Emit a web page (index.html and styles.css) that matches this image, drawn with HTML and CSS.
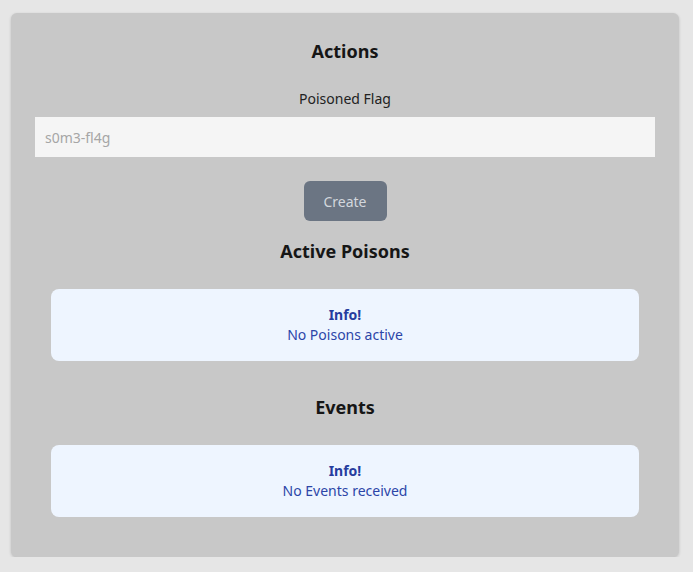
FILE: index.html
```html
<!DOCTYPE html>
<html lang="en">
<head>
<meta charset="utf-8">
<title>Poisons</title>
<link rel="stylesheet" href="styles.css">
</head>
<body>
<main class="card">
  <h2 class="title first">Actions</h2>
  <label class="label" for="flag">Poisoned Flag</label>
  <input class="input" id="flag" type="text" placeholder="s0m3-fl4g">
  <div class="actions"><button class="btn" type="button">Create</button></div>

  <h2 class="title">Active Poisons</h2>
  <div class="alert">
    <div class="alert-title">Info!</div>
    <div class="alert-text">No Poisons active</div>
  </div>

  <h2 class="title">Events</h2>
  <div class="alert">
    <div class="alert-title">Info!</div>
    <div class="alert-text">No Events received</div>
  </div>
</main>
</body>
</html>
```

FILE: styles.css
```css
html, body {
  margin: 0;
  padding: 0;
  background: #e6e6e6;
}
body {
  font-family: "Noto Sans", "Open Sans", sans-serif;
  color: #1a1a1a;
  padding: 13px 14px 0 11px;
}
.card {
  background: #c8c8c8;
  border-radius: 6px;
  box-shadow: 0 1px 3px rgba(0,0,0,0.18);
  padding: 24px 24px 24px;
  display: flex;
  flex-direction: column;
}
.title {
  margin: 16px 0 0;
  font-size: 18px;
  line-height: 28px;
  font-weight: 700;
  text-align: center;
  color: #161616;
}
.title.first { margin-top: 0; }
.label {
  display: block;
  margin-top: 24px;
  font-size: 14px;
  line-height: 20px;
  text-align: center;
  color: #222;
}
.input {
  margin-top: 8px;
  height: 40px;
  box-sizing: border-box;
  border: none;
  background: #f5f5f5;
  padding: 0 10px;
  font-family: inherit;
  font-size: 14px;
  color: #333;
  outline: none;
}
.input::placeholder { color: #a6a6a6; }
.actions {
  margin-top: 24px;
  display: flex;
  justify-content: center;
}
.btn {
  height: 40px;
  width: 83px;
  border: none;
  border-radius: 6px;
  background: #6b7583;
  color: #d3d7dd;
  font-family: inherit;
  font-size: 14px;
  cursor: pointer;
}
.alert {
  margin: 24px 16px 16px;
  background: #eef5ff;
  border-radius: 8px;
  padding: 16px;
  text-align: center;
  font-size: 14px;
  line-height: 20px;
  color: #2c45a8;
}
.alert-title { font-weight: 700; color: #263c9e; }
```
